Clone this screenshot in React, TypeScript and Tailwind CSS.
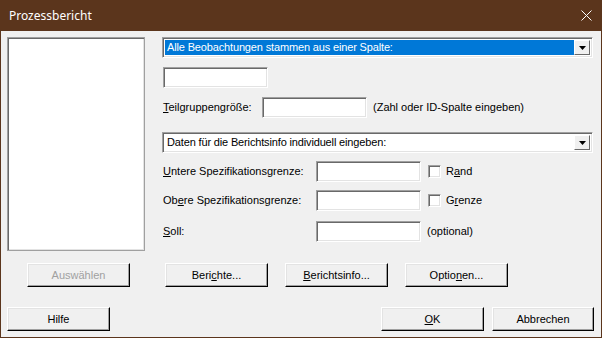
import React from 'react';

const FONT = "font-['Tahoma','Liberation_Sans',Arial,sans-serif]";

function Field({ w }: { w: number }) {
  return (
    <div
      style={{ width: w }}
      className="h-[21px] shrink-0 bg-white border border-t-[#a0a0a0] border-l-[#a0a0a0] border-r-white border-b-white shadow-[inset_1px_1px_0_#696969,inset_-1px_-1px_0_#e3e3e3]"
    />
  );
}

function Check() {
  return (
    <div className="h-[13px] w-[13px] shrink-0 bg-white border border-t-[#a0a0a0] border-l-[#a0a0a0] border-r-white border-b-white shadow-[inset_1px_1px_0_#696969,inset_-1px_-1px_0_#e3e3e3]" />
  );
}

function Btn({ children, disabled, w = 103 }: { children: React.ReactNode; disabled?: boolean; w?: number }) {
  return (
    <button
      style={{ width: w }}
      className={`h-[24px] shrink-0 bg-[#f0f0f0] border border-t-white border-l-white border-r-black border-b-black shadow-[inset_-1px_-1px_0_#a0a0a0,inset_1px_1px_0_#e3e3e3] text-[11px] leading-none flex items-center justify-center ${
        disabled ? 'text-[#a0a0a0]' : 'text-black'
      }`}
    >
      {children}
    </button>
  );
}

function Combo({ text, selected }: { text: string; selected?: boolean }) {
  return (
    <div className="h-[21px] w-[431px] flex bg-white border border-t-[#a0a0a0] border-l-[#a0a0a0] border-r-white border-b-white shadow-[inset_1px_1px_0_#696969,inset_-1px_-1px_0_#e3e3e3] p-[2px]">
      <div
        className={`flex-1 flex items-center pl-[2px] text-[11px] tracking-[-0.15px] leading-none ${
          selected ? 'bg-[#0078d7] text-white' : 'bg-white text-black'
        }`}
      >
        {text}
      </div>
      <div className="w-[16px] h-full bg-[#f0f0f0] border border-t-white border-l-white border-r-[#696969] border-b-[#696969] flex items-center justify-center">
        <svg width="7" height="4" viewBox="0 0 7 4">
          <path d="M0 0h7L3.5 4z" fill="#000" />
        </svg>
      </div>
    </div>
  );
}

export default function App() {
  return (
    <div className={`w-[602px] h-[338px] flex flex-col bg-[#5b351c] ${FONT}`}>
      {/* Title bar */}
      <div className="h-[31px] flex items-center justify-between pl-[9px] pr-[10px] text-white">
        <span className="text-[12px] font-['Segoe_UI','Noto_Sans',sans-serif]">Prozessbericht</span>
        <svg width="11" height="11" viewBox="0 0 11 11">
          <path d="M0.5 0.5l10 10M10.5 0.5l-10 10" stroke="#fff" strokeWidth="1" />
        </svg>
      </div>

      {/* Client area */}
      <div className="flex-1 mx-[1px] mb-[1px] bg-[#f0f0f0] flex flex-col px-[6px] pt-[6px] text-[11px] text-black">
        <div className="flex">
          {/* Column list */}
          <div className="w-[138px] h-[214px] bg-white border border-[#a0a0a0] shadow-[inset_1px_1px_0_#696969,inset_-1px_-1px_0_#e3e3e3]" />

          <div className="ml-[17px] flex flex-col">
            <Combo text="Alle Beobachtungen stammen aus einer Spalte:" selected />
            <div className="mt-[9px] pl-[1px]">
              <Field w={105} />
            </div>
            <div className="mt-[9px] flex items-center">
              <span className="w-[100px] pl-[1px]">
                <u>T</u>eilgruppengröße:
              </span>
              <Field w={105} />
              <span className="ml-[6px]">(Zahl oder ID-Spalte eingeben)</span>
            </div>
            <div className="mt-[14px]">
              <Combo text="Daten für die Berichtsinfo individuell eingeben:" />
            </div>
            <div className="mt-[8px] flex items-center">
              <span className="w-[154px] pl-[1px]">
                <u>U</u>ntere Spezifikationsgrenze:
              </span>
              <Field w={105} />
              <div className="ml-[7px]">
                <Check />
              </div>
              <span className="ml-[5px]">
                R<u>a</u>nd
              </span>
            </div>
            <div className="mt-[8px] flex items-center">
              <span className="w-[154px] pl-[1px]">
                Ob<u>e</u>re Spezifikationsgrenze:
              </span>
              <Field w={105} />
              <div className="ml-[7px]">
                <Check />
              </div>
              <span className="ml-[5px]">
                G<u>r</u>enze
              </span>
            </div>
            <div className="mt-[10px] flex items-center">
              <span className="w-[154px] pl-[1px]">
                <u>S</u>oll:
              </span>
              <Field w={105} />
              <span className="ml-[6px]">(optional)</span>
            </div>
          </div>
        </div>

        {/* Action buttons */}
        <div className="mt-[12px] flex">
          <div className="ml-[20px]">
            <Btn disabled>Auswählen</Btn>
          </div>
          <div className="ml-[35px]">
            <Btn>
              Beri<u>c</u>hte...
            </Btn>
          </div>
          <div className="ml-[17px]">
            <Btn>
              <u>B</u>erichtsinfo...
            </Btn>
          </div>
          <div className="ml-[17px]">
            <Btn>
              Optio<u>n</u>en...
            </Btn>
          </div>
        </div>

        {/* Dialog buttons */}
        <div className="mt-[20px] flex">
          <Btn>Hilfe</Btn>
          <div className="ml-auto flex gap-[8px]">
            <Btn>
              <u>O</u>K
            </Btn>
            <Btn w={102}>Abbrechen</Btn>
          </div>
          <div className="w-[1px]" />
        </div>
      </div>
    </div>
  );
}
